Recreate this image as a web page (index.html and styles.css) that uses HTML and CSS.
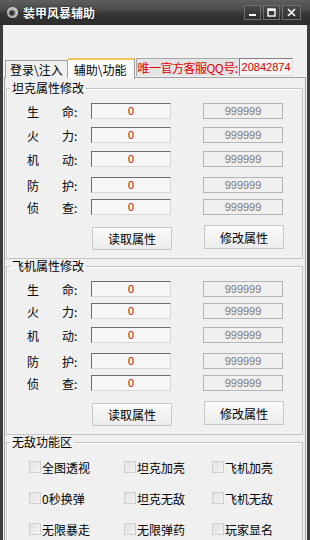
FILE: index.html
```html
<!DOCTYPE html>
<html lang="zh-CN">
<head>
    <meta charset="UTF-8">
    <title>装甲风暴辅助</title>
    <link rel="stylesheet" href="styles.css">
</head>
<body>
    <div class="window">
        <!-- 标题栏 -->
        <div class="titlebar">
            <span class="app-icon"></span>
            <span class="title">装甲风暴辅助</span>
            <div class="sys-buttons">
                <span class="sys-btn"><svg width="9" height="9" viewBox="0 0 9 9"><rect x="1" y="6" width="7" height="2" fill="#fff"/></svg></span>
                <span class="sys-btn"><svg width="9" height="9" viewBox="0 0 9 9"><rect x="1" y="1" width="7" height="7" fill="none" stroke="#fff" stroke-width="1.4"/><rect x="1" y="1" width="7" height="2" fill="#fff"/></svg></span>
                <span class="sys-btn"><svg width="9" height="9" viewBox="0 0 9 9"><path d="M1 1 L8 8 M8 1 L1 8" stroke="#fff" stroke-width="1.6"/></svg></span>
            </div>
        </div>

        <div class="client">
            <div class="tabs">
                <span class="tab">登录\注入</span>
                <span class="tab active">辅助\功能</span>
                <span class="qq-label">唯一官方客服QQ号:</span>
                <input class="qq-box" type="text" value="20842874" readonly>
            </div>

            <div class="panel">
                <!-- 坦克 -->
                <fieldset class="group">
                    <legend>坦克属性修改</legend>
                    <div class="row"><span class="k1">生</span><span class="k2">命:</span><input class="val" value="0"><input class="max" value="999999" disabled></div>
                    <div class="row m8"><span class="k1">火</span><span class="k2">力:</span><input class="val" value="0"><input class="max" value="999999" disabled></div>
                    <div class="row m8"><span class="k1">机</span><span class="k2">动:</span><input class="val" value="0"><input class="max" value="999999" disabled></div>
                    <div class="row m10"><span class="k1">防</span><span class="k2">护:</span><input class="val" value="0"><input class="max" value="999999" disabled></div>
                    <div class="row"><span class="k1">侦</span><span class="k2">查:</span><input class="val" value="0"><input class="max" value="999999" disabled></div>
                    <div class="actions">
                        <button class="btn read">读取属性</button>
                        <button class="btn">修改属性</button>
                    </div>
                </fieldset>

                <!-- 飞机 -->
                <fieldset class="group">
                    <legend>飞机属性修改</legend>
                    <div class="row"><span class="k1">生</span><span class="k2">命:</span><input class="val" value="0"><input class="max" value="999999" disabled></div>
                    <div class="row"><span class="k1">火</span><span class="k2">力:</span><input class="val" value="0"><input class="max" value="999999" disabled></div>
                    <div class="row m8"><span class="k1">机</span><span class="k2">动:</span><input class="val" value="0"><input class="max" value="999999" disabled></div>
                    <div class="row m10"><span class="k1">防</span><span class="k2">护:</span><input class="val" value="0"><input class="max" value="999999" disabled></div>
                    <div class="row"><span class="k1">侦</span><span class="k2">查:</span><input class="val" value="0"><input class="max" value="999999" disabled></div>
                    <div class="actions">
                        <button class="btn read">读取属性</button>
                        <button class="btn">修改属性</button>
                    </div>
                </fieldset>

                <!-- 无敌 -->
                <fieldset class="group last">
                    <legend>无敌功能区</legend>
                    <div class="checks">
                        <label class="chk"><span class="box"></span>全图透视</label>
                        <label class="chk"><span class="box"></span>坦克加亮</label>
                        <label class="chk"><span class="box"></span>飞机加亮</label>
                        <label class="chk"><span class="box"></span>0秒换弹</label>
                        <label class="chk"><span class="box"></span>坦克无敌</label>
                        <label class="chk"><span class="box"></span>飞机无敌</label>
                        <label class="chk"><span class="box"></span>无限暴走</label>
                        <label class="chk"><span class="box"></span>无限弹药</label>
                        <label class="chk"><span class="box"></span>玩家显名</label>
                    </div>
                </fieldset>
            </div>
        </div>
    </div>
</body>
</html>
```

FILE: styles.css
```css
body {
    margin: 0;
    font-family: "Noto Sans CJK SC", "Liberation Sans", sans-serif;
    font-size: 12px;
    color: #000;
    background: #3a3a3a;
}
.window {
    width: 310px;
    height: 540px;
    background: #3c3c3c;
    overflow: hidden;
}
.titlebar {
    height: 25px;
    display: flex;
    align-items: center;
    padding: 0 0 0 7px;
    box-sizing: border-box;
    background: linear-gradient(#5e5e5e 0, #4d4d4d 35%, #363636 55%, #2c2c2c 100%);
}
.app-icon {
    width: 11px;
    height: 11px;
    border-radius: 50%;
    background: radial-gradient(circle at 45% 55%, #333 0, #333 25%, #9a9a9a 35%, #dcdcdc 70%, #888 100%);
}
.title {
    margin-left: 5px;
    color: #fff;
    font-weight: bold;
    line-height: 14px;
    text-shadow: 0 0 2px #000;
}
.sys-buttons {
    margin-left: auto;
    margin-right: 9px;
    display: flex;
    gap: 2px;
}
.sys-btn {
    width: 17px;
    height: 15px;
    box-sizing: border-box;
    border: 1px solid #707070;
    background: linear-gradient(#4a4a4a, #2e2e2e);
    display: flex;
    align-items: center;
    justify-content: center;
}
.sys-btn:last-child {
    width: 19px;
}
.client {
    margin: 0 3px;
    height: 515px;
    background: #f0f0f0;
    padding-top: 32px;
    box-sizing: border-box;
}
.tabs {
    display: flex;
    align-items: flex-end;
    height: 21px;
    padding-left: 2px;
    margin-bottom: -1px;
    position: relative;
}
.tab {
    height: 17px;
    line-height: 17px;
    padding: 0 4px;
    border: 1px solid #a0a0a0;
    border-bottom: none;
    background: #f0f0f0;
    box-sizing: content-box;
}
.tab.active {
    height: 19px;
    line-height: 20px;
    padding: 0 8px 0 6px;
    background: #fff;
    border-top: 2px solid #f2c45e;
    border-left: none;
    margin-bottom: -1px;
}
.qq-label {
    margin-left: 1px;
    align-self: flex-start;
    height: 17px;
    line-height: 17px;
    margin-top: 1px;
    padding-right: 1px;
    border-top: 1px solid #a8a8a8;
    border-left: 1px solid #a8a8a8;
    background: #e4e4e4;
    color: #e00000;
    white-space: nowrap;
    letter-spacing: -0.5px;
}
.qq-box {
    align-self: flex-start;
    margin-top: 1px;
    width: 54px;
    height: 18px;
    box-sizing: border-box;
    border: 1px solid #808080;
    border-right-color: #e0e0e0;
    border-bottom-color: #e0e0e0;
    background: #f4f4f4;
    color: #d00000;
    font-family: "Liberation Sans", sans-serif;
    font-size: 11px;
    padding: 0 0 0 2px;
}
.panel {
    margin-left: 1px;
    width: 302px;
    height: 463px;
    box-sizing: border-box;
    border: 1px solid #a0a0a0;
    border-bottom: none;
    background: #f0f0f0;
    padding-top: 3px;
}
.group {
    margin: 0 2px 0 1px;
    padding: 8px 0 7px 0;
    border: 1px solid #c4c4c4;
    box-shadow: inset 1px 1px 0 #fff;
    min-width: 0;
}
.group legend {
    margin-left: 3px;
    padding: 0 2px;
    line-height: 14px;
    font-size: 12px;
}
.group.last {
    border-bottom: none;
    height: 120px;
}
.row {
    display: flex;
    align-items: center;
    height: 16px;
    margin-top: 6px;
    padding-left: 20px;
}
.row:first-of-type {
    margin-top: 0;
}
.row.m8 {
    margin-top: 8px;
}
.row.m10 {
    margin-top: 10px;
}
.k1 {
    width: 35px;
    font-size: 12px;
}
.k2 {
    width: 29px;
    font-size: 12px;
}
.val, .max {
    width: 80px;
    height: 16px;
    box-sizing: border-box;
    padding: 0;
    text-align: center;
    font-family: "Liberation Sans", sans-serif;
    font-size: 11px;
}
.val {
    border: 1px solid #6c6c6c;
    border-right-color: #d8d8d8;
    border-bottom-color: #d8d8d8;
    background: #f6f6f6;
    color: #c80000;
}
.max {
    margin-left: 32px;
    border: 1px solid #b4b4b4;
    background: #efefef;
    color: #7a7a7a;
}
.actions {
    display: flex;
    align-items: flex-start;
    height: 26px;
    margin-top: 10px;
    padding-left: 85px;
}
.btn {
    width: 80px;
    height: 24px;
    border: 1px solid #c8c8c8;
    background: linear-gradient(#fafafa, #ececec);
    font-family: "Noto Sans CJK SC", sans-serif;
    font-size: 12px;
    color: #000;
    padding: 0;
}
.btn.read {
    margin-top: 2px;
    margin-right: 32px;
    height: 23px;
}
.checks {
    display: grid;
    grid-template-columns: 95px 88px 1fr;
    grid-auto-rows: 16px;
    row-gap: 15px;
    padding: 2px 0 0 22px;
}
.chk {
    display: flex;
    align-items: center;
    color: #000;
}
.box {
    width: 12px;
    height: 12px;
    margin-right: 1px;
    box-sizing: border-box;
    border: 1px solid #d0d0d0;
    background: linear-gradient(135deg, #e2e2e2, #f4f4f4);
}
```
